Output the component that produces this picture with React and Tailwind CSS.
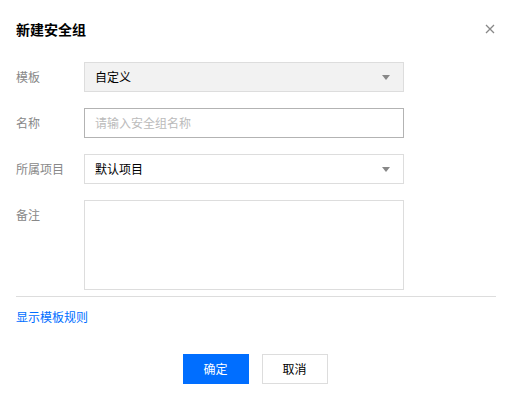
import React from "react";

const Arrow = () => (
  <svg width="8" height="5" viewBox="0 0 8 5" className="shrink-0">
    <path d="M0 0H8L4 5Z" fill="#888" />
  </svg>
);

const Row = ({ label, children, top }) => (
  <div className="flex">
    <div className={`w-[68px] shrink-0 text-[12px] text-[#888] leading-[30px]`}>{label}</div>
    {children}
  </div>
);

export default function App() {
  return (
    <div
      className="w-[514px] h-[400px] bg-white relative"
      style={{ fontFamily: '"Noto Sans CJK SC", "Noto Sans", sans-serif' }}
    >
      <div className="pl-4 pr-[18px]">
        <div className="pt-[19px] h-[39px] flex items-start justify-between">
          <div className="text-[14px] font-bold text-black leading-5">新建安全组</div>
          <svg width="10" height="10" viewBox="0 0 10 10" className="mt-[5px] mr-[1px]">
            <path d="M1 1L9 9M9 1L1 9" stroke="#888" strokeWidth="1.3" />
          </svg>
        </div>
        <div className="mt-[23px] flex flex-col gap-4">
          <Row label="模板">
            <div className="w-[320px] h-[30px] bg-[#f2f2f2] border border-[#ddd] flex items-center justify-between pl-[10px] pr-[13px] text-[12px] text-black">
              <span>自定义</span>
              <Arrow />
            </div>
          </Row>
          <Row label="名称">
            <div className="w-[320px] h-[30px] border border-[#b3b3b3] flex items-center pl-[10px] text-[12px] text-[#bbb]">
              请输入安全组名称
            </div>
          </Row>
          <Row label="所属项目">
            <div className="w-[320px] h-[30px] bg-white border border-[#ddd] flex items-center justify-between pl-[10px] pr-[13px] text-[12px] text-black">
              <span>默认项目</span>
              <Arrow />
            </div>
          </Row>
          <Row label="备注">
            <div className="w-[320px] h-[90px] border border-[#ddd]" />
          </Row>
        </div>
        <div className="mt-[6px] h-px bg-[#ddd]" />
        <div className="mt-[10px] text-[12px] leading-5 text-[#006eff]">显示模板规则</div>
        <div className="mt-[27px] flex justify-center gap-[13px] pr-[2px]">
          <div className="w-[66px] h-[30px] bg-[#006eff] text-white text-[12px] flex items-center justify-center">确定</div>
          <div className="w-[66px] h-[30px] bg-white border border-[#ddd] text-black text-[12px] flex items-center justify-center">取消</div>
        </div>
      </div>
    </div>
  );
}
